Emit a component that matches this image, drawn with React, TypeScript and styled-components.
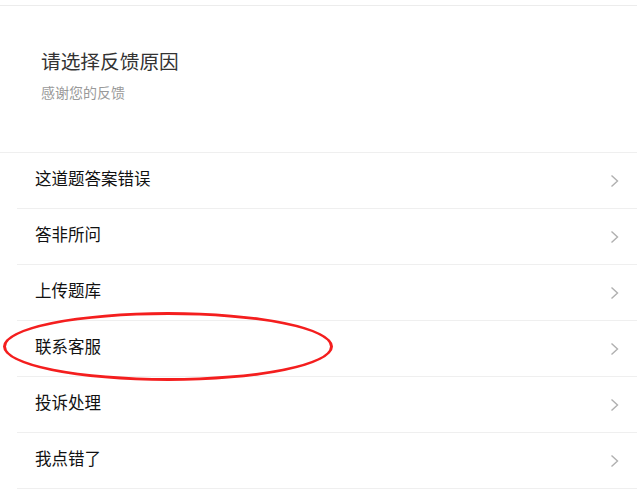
import React from 'react';
import styled, { createGlobalStyle } from 'styled-components';

const GlobalStyle = createGlobalStyle`
  html, body {
    margin: 0;
    padding: 0;
    background: #fff;
  }
  body {
    font-family: "Noto Sans CJK SC", "Noto Sans", sans-serif;
  }
`;

const Page = styled.div`
  position: relative;
  margin-top: 5px;
  border-top: 1px solid #ececec;
  width: 637px;
`;

const Header = styled.div`
  box-sizing: border-box;
  height: 147px;
  padding: 41px 0 0 41px;
  border-bottom: 1px solid #efefef;
`;

const Title = styled.div`
  font-size: 19.7px;
  line-height: 28px;
  color: #333;
`;

const Subtitle = styled.div`
  margin-top: 7px;
  font-size: 14px;
  line-height: 20px;
  color: #999;
`;

const List = styled.ul`
  list-style: none;
  margin: 0;
  padding: 0;
`;

const Row = styled.li`
  box-sizing: border-box;
  display: flex;
  align-items: center;
  justify-content: space-between;
  height: 56px;
  margin-left: 17px;
  padding: 0 18px 0 18px;
  border-bottom: 1px solid #efefef;
`;

const Label = styled.span`
  font-size: 16.5px;
  line-height: 20px;
  margin-bottom: 5px;
  color: #111;
`;

const Chevron = styled.svg`
  display: block;
  width: 9px;
  height: 14px;
`;

const Highlight = styled.div`
  position: absolute;
  left: 3px;
  top: 306px;
  width: 330px;
  height: 69px;
  box-sizing: border-box;
  border: 3px solid #f41e1e;
  border-radius: 50%;
  pointer-events: none;
`;

const reasons = ['这道题答案错误', '答非所问', '上传题库', '联系客服', '投诉处理', '我点错了'];

const Arrow = () => (
  <Chevron viewBox="0 0 9 14">
    <polyline points="1.5,1.5 7.5,7 1.5,12.5" fill="none" stroke="#b0b0b0" strokeWidth="1.4" />
  </Chevron>
);

const App = () => (
  <Page>
    <GlobalStyle />
    <Header>
      <Title>请选择反馈原因</Title>
      <Subtitle>感谢您的反馈</Subtitle>
    </Header>
    <List>
      {reasons.map((r) => (
        <Row key={r}>
          <Label>{r}</Label>
          <Arrow />
        </Row>
      ))}
    </List>
    <Highlight />
  </Page>
);

export default App;
